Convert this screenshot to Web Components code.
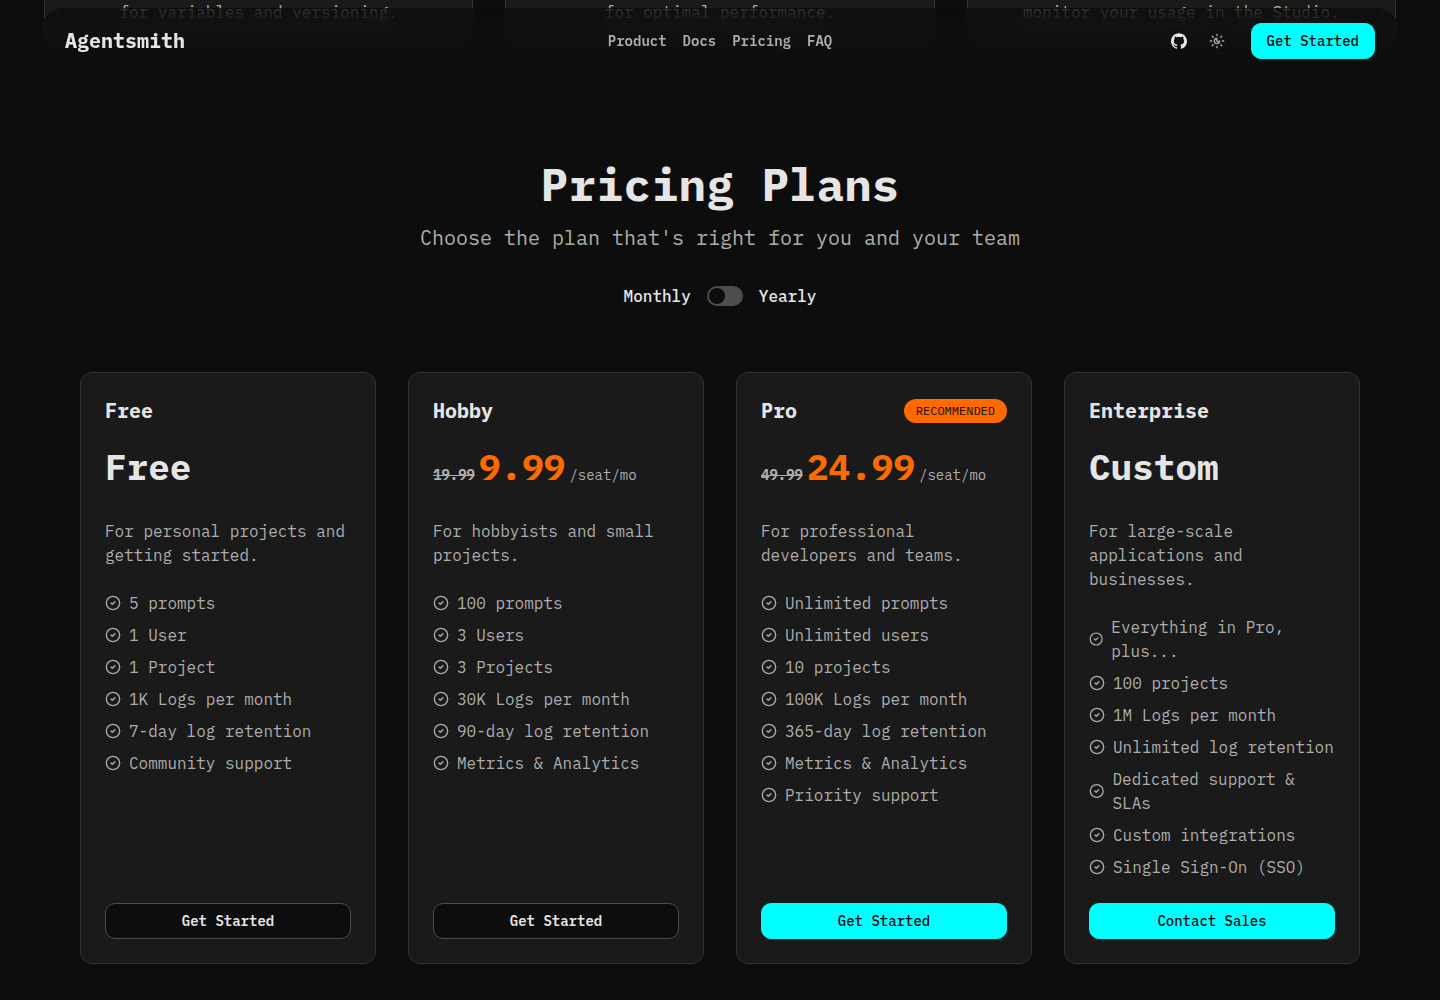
<!DOCTYPE html>
<html lang="en">
<head>
<meta charset="utf-8">
<meta name="viewport" content="width=device-width, initial-scale=1">
<title>Agentsmith - Pricing</title>
<style>
:root {
  --bg: #0d0d0d; --card: #1a1a1a; --line: #333333; --fg: #e5e5e5; --muted: #adadad;
  --primary: #00ffff; --accent: #ff6a00;
}
body { margin: 0; background: var(--bg); color: var(--fg);
  font: 16px/24px "IBM Plex Mono", "Liberation Mono", monospace; }
</style>
</head>
<body>
<landing-page></landing-page>
<script>
const define = (name, html, setup) => {
  const template = document.createElement('template');
  template.innerHTML = '<style>*{box-sizing:border-box}:host{display:block}</style>' + html;
  customElements.define(name, class extends HTMLElement {
    connectedCallback() {
      if (this.shadowRoot) return;
      const root = this.attachShadow({ mode: 'open' });
      root.append(template.content.cloneNode(true));
      if (setup) setup(root, this);
    }
  });
};

define('app-button', `
<style>
button { width: 100%; height: 36px; padding: 0 15px; border: 1px solid var(--primary); border-radius: 10px;
  background: var(--primary); color: #0d0d0d; font: 500 14px/20px "IBM Plex Mono", "Liberation Mono", monospace; cursor: pointer; }
:host([variant="outline"]) button { background: var(--bg); border-color: #4d4d4d; color: var(--fg); font-weight: 600; }
</style>
<button type="button"><slot></slot></button>`);

define('nav-bar', `
<style>
:host { position: fixed; z-index: 10; top: 8px; left: 40px; right: 40px; }
header { position: relative; display: grid; grid-template-columns: 1fr auto 1fr; align-items: center;
  padding: 15px 25px; border-radius: 24px; background: rgba(13, 13, 13, .75); overflow: hidden; }
header::before { content: ""; position: absolute; inset: 0; border-radius: 24px; backdrop-filter: blur(12px);
  -webkit-mask-image: linear-gradient(transparent, #000 14px); mask-image: linear-gradient(transparent, #000 14px); }
header > * { position: relative; }
a { color: inherit; text-decoration: none; }
.brand { font-size: 20px; font-weight: 700; line-height: 28px; justify-self: start; }
nav { display: flex; gap: 16px; font-size: 14px; font-weight: 600; line-height: 20px; color: var(--muted); }
.actions { display: flex; align-items: center; justify-self: end; }
.github { display: flex; margin-right: 12px; }
.theme { display: grid; place-items: center; width: 36px; height: 36px; margin-right: 16px; padding: 0;
  border: 0; background: none; color: var(--muted); cursor: pointer; }
svg { width: 16px; height: 16px; display: block; }
</style>
<header>
  <a class="brand" href="#">Agentsmith</a>
  <nav aria-label="Main"><a href="#product">Product</a><a href="#docs">Docs</a><a href="#pricing">Pricing</a><a href="#faq">FAQ</a></nav>
  <div class="actions">
    <a class="github" href="#github" aria-label="GitHub"><svg viewBox="0 0 24 24" fill="currentColor"><path d="M12 .297c-6.63 0-12 5.373-12 12 0 5.303 3.438 9.8 8.205 11.385.6.113.82-.258.82-.577 0-.285-.01-1.04-.015-2.04-3.338.724-4.042-1.61-4.042-1.61C4.422 18.07 3.633 17.7 3.633 17.7c-1.087-.744.084-.729.084-.729 1.205.084 1.838 1.236 1.838 1.236 1.07 1.835 2.809 1.305 3.495.998.108-.776.417-1.305.76-1.605-2.665-.3-5.466-1.332-5.466-5.93 0-1.31.465-2.38 1.235-3.22-.135-.303-.54-1.523.105-3.176 0 0 1.005-.322 3.3 1.23.96-.267 1.98-.399 3-.405 1.02.006 2.04.138 3 .405 2.28-1.552 3.285-1.23 3.285-1.23.645 1.653.24 2.873.12 3.176.765.84 1.23 1.91 1.23 3.22 0 4.61-2.805 5.625-5.475 5.92.42.36.81 1.096.81 2.22 0 1.606-.015 2.896-.015 3.286 0 .315.21.69.825.57C20.565 22.092 24 17.592 24 12.297c0-6.627-5.373-12-12-12"/></svg></a>
    <button class="theme" type="button" aria-label="Toggle theme"><svg viewBox="0 0 24 24" fill="none" stroke="currentColor" stroke-width="2" stroke-linecap="round" stroke-linejoin="round"><path d="M12 8a2.83 2.83 0 0 0 4 4 4 4 0 1 1-4-4"/><path d="M12 2v2M12 20v2M4.9 4.9l1.4 1.4M17.7 17.7l1.4 1.4M2 12h2M20 12h2M6.3 17.7l-1.4 1.4M19.1 4.9l-1.4 1.4"/></svg></button>
    <app-button>Get Started</app-button>
  </div>
</header>`);

define('feature-card', `
<style>
:host { padding: 0 24px 24px; border: 1px solid var(--line); border-top: 0; border-radius: 0 0 12px 12px;
  background: var(--card); color: var(--muted); text-align: center; box-sizing: border-box; }
</style>
<slot></slot>`);

define('period-switch', `
<style>
:host { display: flex; justify-content: center; align-items: center; gap: 16px; font-weight: 500; line-height: 20px; }
input { appearance: none; display: flex; width: 36px; height: 20px; margin: 0; padding: 2px; border-radius: 10px;
  background: #4d4d4d; cursor: pointer; }
input::before { content: ""; width: 16px; height: 16px; border-radius: 50%; background: var(--bg); }
input:checked { justify-content: flex-end; background: var(--primary); }
</style>
<label for="period">Monthly</label><input id="period" type="checkbox" role="switch"><label for="period">Yearly</label>`);

define('plan-feature', `
<style>
:host { display: flex; align-items: center; gap: 8px; }
svg { width: 16px; height: 16px; min-width: 0; }
</style>
<svg viewBox="0 0 24 24" fill="none" stroke="currentColor" stroke-width="2" stroke-linecap="round" stroke-linejoin="round" aria-hidden="true"><circle cx="12" cy="12" r="10"/><path d="m9 12 2 2 4-4"/></svg>
<span><slot></slot></span>`);

define('plan-card', `
<style>
:host { display: flex; flex-direction: column; box-sizing: border-box; padding: 24px; border: 1px solid var(--line);
  border-radius: 12px; background: var(--card); color: var(--muted); }
.head { display: flex; justify-content: space-between; align-items: center; height: 28px; }
h3 { margin: 0; font-size: 20px; line-height: 28px; color: var(--fg); }
.badge { padding: 0 12px; border-radius: 12px; background: var(--accent); color: var(--bg); font-size: 12px; line-height: 24px; }
.price { display: flex; align-items: baseline; gap: 4px; height: 40px; margin-top: 22px; font-size: 14px; line-height: 40px; }
.price strong { font-size: 36px; color: var(--fg); }
.price s { font-weight: 700; }
.price s + strong { color: var(--accent); }
p { margin: 32px 0 0; }
.list { display: flex; flex-direction: column; gap: 8px; margin: 24px 0; }
app-button { margin-top: auto; }
</style>
<div class="head"><h3></h3></div>
<div class="price"></div>
<p></p>
<div class="list" role="list"></div>
<app-button></app-button>`, (root, host) => {
  const plan = host.plan;
  const add = (parent, tag, text) => {
    const node = document.createElement(tag);
    node.textContent = text;
    root.querySelector(parent).append(node);
    return node;
  };
  root.querySelector('h3').textContent = plan.name;
  if (plan.badge) add('.head', 'span', plan.badge).className = 'badge';
  if (plan.was) add('.price', 's', plan.was);
  add('.price', 'strong', plan.price);
  if (plan.was) add('.price', 'span', '/seat/mo');
  root.querySelector('p').textContent = plan.text;
  plan.features.forEach(f => add('.list', 'plan-feature', f).setAttribute('role', 'listitem'));
  const button = root.querySelector('app-button');
  button.textContent = plan.action;
  if (plan.outline) button.setAttribute('variant', 'outline');
});

const plans = [
  { name: 'Free', price: 'Free', text: 'For personal projects and getting started.', action: 'Get Started', outline: true,
    features: ['5 prompts', '1 User', '1 Project', '1K Logs per month', '7-day log retention', 'Community support'] },
  { name: 'Hobby', was: '19.99', price: '9.99', text: 'For hobbyists and small projects.', action: 'Get Started', outline: true,
    features: ['100 prompts', '3 Users', '3 Projects', '30K Logs per month', '90-day log retention', 'Metrics & Analytics'] },
  { name: 'Pro', badge: 'RECOMMENDED', was: '49.99', price: '24.99', text: 'For professional developers and teams.', action: 'Get Started',
    features: ['Unlimited prompts', 'Unlimited users', '10 projects', '100K Logs per month', '365-day log retention', 'Metrics & Analytics', 'Priority support'] },
  { name: 'Enterprise', price: 'Custom', text: 'For large-scale applications and businesses.', action: 'Contact Sales',
    features: ['Everything in Pro, plus...', '100 projects', '1M Logs per month', 'Unlimited log retention', 'Dedicated support & SLAs', 'Custom integrations', 'Single Sign-On (SSO)'] }
];

define('pricing-section', `
<style>
:host { box-sizing: border-box; max-width: 1328px; margin: 0 auto; padding: 111px 24px 36px; }
h2 { margin: 0; text-align: center; font-size: 46px; line-height: 48px; }
p { margin: 16px 0 34px; text-align: center; font-size: 20px; line-height: 28px; color: var(--muted); }
.plans { display: grid; grid-template-columns: repeat(auto-fit, minmax(280px, 1fr)); gap: 32px; margin-top: 66px; }
</style>
<h2>Pricing Plans</h2>
<p>Choose the plan that's right for you and your team</p>
<period-switch></period-switch>
<div class="plans"></div>`, root => {
  const grid = root.querySelector('.plans');
  for (const plan of plans) {
    const card = document.createElement('plan-card');
    card.plan = plan;
    grid.append(card);
  }
});

define('landing-page', `
<style>
.features { display: grid; grid-template-columns: repeat(3, 1fr); gap: 32px; max-width: 1352px; margin: 0 auto; }
</style>
<nav-bar></nav-bar>
<main>
  <div class="features">
    <feature-card>for variables and versioning.</feature-card>
    <feature-card>for optimal performance.</feature-card>
    <feature-card>monitor your usage in the Studio.</feature-card>
  </div>
  <pricing-section id="pricing"></pricing-section>
</main>`);
</script>
</body>
</html>
